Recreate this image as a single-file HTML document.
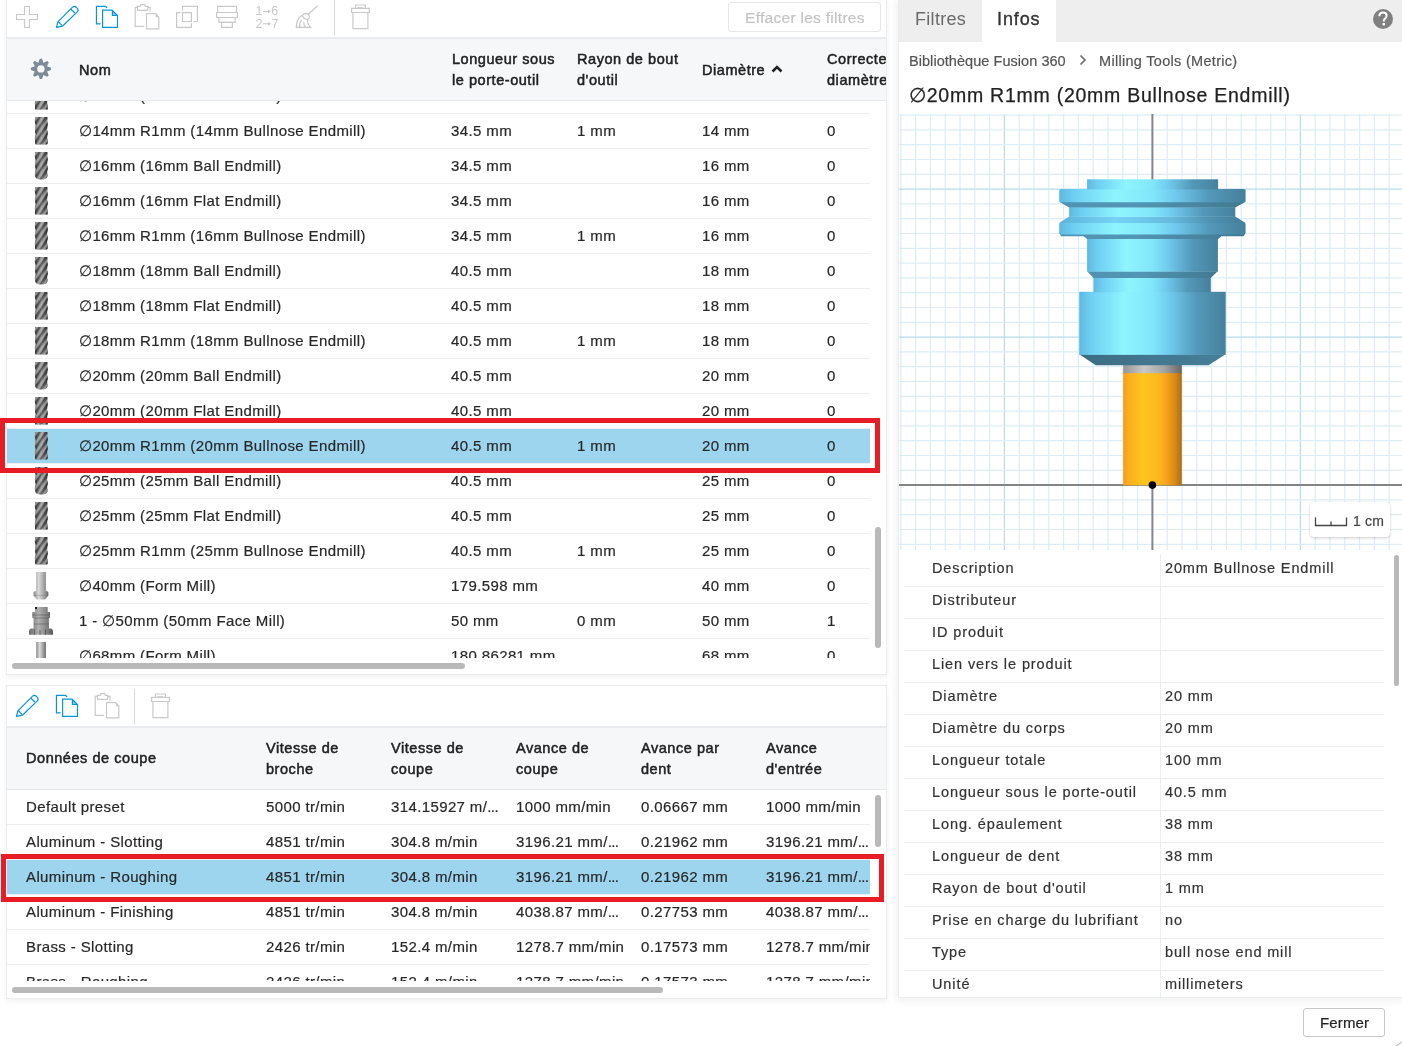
<!DOCTYPE html>
<html><head><meta charset="utf-8">
<style>
*{box-sizing:border-box;margin:0;padding:0}
html,body{width:1402px;height:1046px;overflow:hidden;background:#fff;font-family:"Liberation Sans",sans-serif;color:#282828}
#root{position:absolute;left:0;top:0;width:1402px;height:1046px;will-change:transform}
.a{position:absolute}
.t{position:absolute;font-size:15px;letter-spacing:0.38px;white-space:nowrap;line-height:18px;-webkit-text-stroke:0.2px currentColor}
.h{position:absolute;font-size:14.5px;font-weight:normal;-webkit-text-stroke:0.5px #222;color:#222;white-space:nowrap;line-height:20.6px;letter-spacing:0.55px}
.sep{position:absolute;height:1px;background:#eceef0}
.sb{position:absolute;background:#b9b9b9;border-radius:3px}
.clip{position:absolute;overflow:hidden}
svg{position:absolute;overflow:visible}
</style></head><body><div id="root">

<div class="a" style="left:6px;top:-3px;width:881px;height:678px;border:1px solid #eaedf0;box-shadow:0 3px 6px rgba(0,0,0,0.05);background:#fff"></div>
<div class="a" style="left:6px;top:685px;width:881px;height:314px;border:1px solid #eaedf0;box-shadow:0 3px 6px rgba(0,0,0,0.05);background:#fff"></div>
<div class="a" style="left:898px;top:-3px;width:510px;height:1001px;border:1px solid #eaedf0;box-shadow:-2px 3px 8px rgba(0,0,0,0.06);background:#fff"></div>
<svg style="left:15px;top:5px" width="24" height="24" viewBox="0 0 24 24"><path d="M9.5 1.5h5v8h8v5h-8v8h-5v-8h-8v-5h8z" fill="none" stroke="#c9c9c9" stroke-width="1.15"/></svg>
<svg style="left:50px;top:2px" width="35" height="34" viewBox="0 0 35 34"><g fill="none" stroke="#0696d7" stroke-width="1.2" stroke-linejoin="round"><path d="M6.45 25.4 L7.9 19.8 L22.6 5.1 Q24.4 3.5 26.2 5.2 L27.3 6.3 Q29 8.2 27.3 9.9 L12.4 24.2 Z"/><path d="M8.2 19.5 L12.2 23.6"/><path d="M21 7.2 L24.9 11"/></g></svg>
<svg style="left:90px;top:2px" width="35" height="34" viewBox="0 0 35 34"><g fill="none" stroke="#0696d7" stroke-width="1.2"><path d="M10.6 21.8 H6.45 V4.45 H15.5 L17.2 5.8"/><path d="M12.6 8.2 H22.1 L27.5 13.5 V25.4 H12.6 Z"/><path d="M22.4 8.6 V13.5 H27.3"/><path d="M22.4 8.6 L27.3 13.5 H22.4 Z" fill="#0696d7" opacity="0.5" stroke="none"/></g></svg>
<svg style="left:130px;top:2px" width="35" height="34" viewBox="0 0 35 34"><g fill="none" stroke="#c9c9c9" stroke-width="1.2"><path d="M7.3 5.45 H5.2 V24.4 H14"/><path d="M17.8 5.45 H20.1 V9.5"/><path d="M7.6 8.3 L7.3 4.3 H10.2 L10.9 2.7 H14.6 L15.3 4.3 H17.9 L17.5 8.3 Z"/><path d="M16.5 11.6 H25.8 L28.8 15.2 V26.8 H16.5 Z"/><path d="M25.8 11.6 L28.8 15.2 H25.8 Z" fill="#c9c9c9" stroke="none"/></g></svg>
<svg style="left:170px;top:2px" width="35" height="34" viewBox="0 0 35 34"><g fill="none" stroke="#c9c9c9" stroke-width="1.2"><path d="M10.6 10.6 H6.6 V25.4 H21.4 V21.2"/><path d="M12.5 8.5 V4.45 H27.4 V19.5 H23.2"/><path d="M12.5 10.6 H21.4 V19.5 H12.5 Z"/></g></svg>
<svg style="left:210px;top:2px" width="35" height="34" viewBox="0 0 35 34"><g fill="none" stroke="#c9c9c9" stroke-width="1.2"><path d="M7.6 4.45 H26.4 V10.5 H7.6 Z"/><path d="M6.6 10.5 H27.4 V15.5 H6.6 Z"/><path d="M8.9 15.5 H25.1 V20.4 H8.9 Z"/><path d="M11.6 20.4 H22.4 V25.4 H11.6 Z"/></g></svg>
<svg style="left:250px;top:2px" width="35" height="34" viewBox="0 0 35 34"><g fill="#c9c9c9" font-family="Liberation Sans" font-size="12.5px"><text x="5.6" y="12.6">1</text><text x="21.3" y="13.1">6</text><text x="5.6" y="26">2</text><text x="21.6" y="26">7</text></g><g stroke="#c9c9c9" stroke-width="1.1" fill="#c9c9c9"><path d="M13 9.5 H18.5"/><path d="M18 7.6 L21 9.5 L18 11.4 Z" stroke="none"/><path d="M13 21.8 H18.5"/><path d="M18 19.9 L21 21.8 L18 23.7 Z" stroke="none"/></g></svg>
<svg style="left:290px;top:2px" width="35" height="34" viewBox="0 0 35 34"><g fill="none" stroke="#c9c9c9" stroke-width="1.2" stroke-linecap="round"><path d="M27.1 4.3 L18.4 12.3"/><path d="M12.3 13.4 Q14.2 11.2 17 11.6 Q19.6 12.3 19.5 15 Q19.2 17 17.6 17.4 Q14.2 17.6 12.3 13.4 Z"/><path d="M12.3 13.3 Q6.3 16.5 6.3 25.4 H20.6 Q17 21.5 17.6 17.4"/><path d="M11.5 18.4 Q9.3 20.5 9.5 25.3"/><path d="M13.8 20.1 Q13.6 23.5 15.5 25.3"/></g></svg>
<div class="a" style="left:334px;top:0;width:1px;height:35px;background:#d9d9d9"></div>
<svg style="left:343px;top:0px" width="35" height="34" viewBox="0 0 35 34"><g fill="none" stroke="#c9c9c9" stroke-width="1.2"><path d="M8.6 8.45 H26.3 V12.5 H8.6 Z"/><path d="M12.5 8.45 V5 H22.4 V8.45"/><path d="M14.5 7.7 H20.1" stroke-width="1"/><path d="M9.9 12.5 V28.6 H24.9 V12.5"/></g></svg>
<div class="a" style="left:728px;top:2px;width:153px;height:30px;border:1px solid #e6e6e6;border-radius:3px"></div>
<div class="t" style="left:745px;top:9px;color:#c4c4c4;font-size:15.5px;letter-spacing:0.29px">Effacer les filtres</div>
<div class="a" style="left:7px;top:37px;width:879px;height:2px;background:#e8ecef"></div>
<div class="a" style="left:7px;top:39px;width:879px;height:61px;background:#f5f7f9"></div>
<div class="a" style="left:7px;top:100px;width:879px;height:1px;background:#e6eaed"></div>
<svg style="left:0;top:0" width="1402" height="1046"><path d="M39.79 58.86 L42.01 58.86 L43.43 62.80 L47.21 61.02 L48.78 62.59 L47.00 66.37 L50.94 67.79 L50.94 70.01 L47.00 71.43 L48.78 75.21 L47.21 76.78 L43.43 75.00 L42.01 78.94 L39.79 78.94 L38.37 75.00 L34.59 76.78 L33.02 75.21 L34.80 71.43 L30.86 70.01 L30.86 67.79 L34.80 66.37 L33.02 62.59 L34.59 61.02 L38.37 62.80Z M37.20 68.90 a3.70 3.70 0 1 0 7.40 0 a3.70 3.70 0 1 0 -7.40 0Z" fill="#7c8b97" fill-rule="evenodd"/></svg>
<div class="h" style="left:79px;top:60px">Nom</div>
<div class="h" style="left:452px;top:49px">Longueur sous<br>le porte-outil</div>
<div class="h" style="left:577px;top:49px">Rayon de bout<br>d'outil</div>
<div class="h" style="left:702px;top:60px">Diamètre</div>
<svg style="left:771px;top:65px" width="12" height="8" viewBox="0 0 12 8"><path d="M1.5 6.5 L6 2 L10.5 6.5" fill="none" stroke="#222" stroke-width="2.6"/></svg>
<div class="clip" style="left:820px;top:40px;width:66px;height:55px"><div class="h" style="left:7px;top:9px">Correcteur de<br>diamètre</div></div>
<div class="clip" style="left:7px;top:101px;width:879px;height:557px">
<div class="t" style="left:72px;top:-14.5px">∅14mm (14mm Flat Endmill)</div>
<div class="t" style="left:444px;top:-14.5px">34.5 mm</div>
<div class="t" style="left:695px;top:-14.5px">14 mm</div>
<div class="t" style="left:820px;top:-14.5px">0</div>
<div class="sep" style="left:0;top:12px;width:863px"></div>
<div class="t" style="left:72px;top:20.5px">∅14mm R1mm (14mm Bullnose Endmill)</div>
<div class="t" style="left:444px;top:20.5px">34.5 mm</div>
<div class="t" style="left:570px;top:20.5px">1 mm</div>
<div class="t" style="left:695px;top:20.5px">14 mm</div>
<div class="t" style="left:820px;top:20.5px">0</div>
<div class="sep" style="left:0;top:47px;width:863px"></div>
<div class="t" style="left:72px;top:55.5px">∅16mm (16mm Ball Endmill)</div>
<div class="t" style="left:444px;top:55.5px">34.5 mm</div>
<div class="t" style="left:695px;top:55.5px">16 mm</div>
<div class="t" style="left:820px;top:55.5px">0</div>
<div class="sep" style="left:0;top:82px;width:863px"></div>
<div class="t" style="left:72px;top:90.5px">∅16mm (16mm Flat Endmill)</div>
<div class="t" style="left:444px;top:90.5px">34.5 mm</div>
<div class="t" style="left:695px;top:90.5px">16 mm</div>
<div class="t" style="left:820px;top:90.5px">0</div>
<div class="sep" style="left:0;top:117px;width:863px"></div>
<div class="t" style="left:72px;top:125.5px">∅16mm R1mm (16mm Bullnose Endmill)</div>
<div class="t" style="left:444px;top:125.5px">34.5 mm</div>
<div class="t" style="left:570px;top:125.5px">1 mm</div>
<div class="t" style="left:695px;top:125.5px">16 mm</div>
<div class="t" style="left:820px;top:125.5px">0</div>
<div class="sep" style="left:0;top:152px;width:863px"></div>
<div class="t" style="left:72px;top:160.5px">∅18mm (18mm Ball Endmill)</div>
<div class="t" style="left:444px;top:160.5px">40.5 mm</div>
<div class="t" style="left:695px;top:160.5px">18 mm</div>
<div class="t" style="left:820px;top:160.5px">0</div>
<div class="sep" style="left:0;top:187px;width:863px"></div>
<div class="t" style="left:72px;top:195.5px">∅18mm (18mm Flat Endmill)</div>
<div class="t" style="left:444px;top:195.5px">40.5 mm</div>
<div class="t" style="left:695px;top:195.5px">18 mm</div>
<div class="t" style="left:820px;top:195.5px">0</div>
<div class="sep" style="left:0;top:222px;width:863px"></div>
<div class="t" style="left:72px;top:230.5px">∅18mm R1mm (18mm Bullnose Endmill)</div>
<div class="t" style="left:444px;top:230.5px">40.5 mm</div>
<div class="t" style="left:570px;top:230.5px">1 mm</div>
<div class="t" style="left:695px;top:230.5px">18 mm</div>
<div class="t" style="left:820px;top:230.5px">0</div>
<div class="sep" style="left:0;top:257px;width:863px"></div>
<div class="t" style="left:72px;top:265.5px">∅20mm (20mm Ball Endmill)</div>
<div class="t" style="left:444px;top:265.5px">40.5 mm</div>
<div class="t" style="left:695px;top:265.5px">20 mm</div>
<div class="t" style="left:820px;top:265.5px">0</div>
<div class="sep" style="left:0;top:292px;width:863px"></div>
<div class="t" style="left:72px;top:300.5px">∅20mm (20mm Flat Endmill)</div>
<div class="t" style="left:444px;top:300.5px">40.5 mm</div>
<div class="t" style="left:695px;top:300.5px">20 mm</div>
<div class="t" style="left:820px;top:300.5px">0</div>
<div class="a" style="left:0;top:328px;width:863px;height:34px;background:#9dd5ef"></div>
<div class="sep" style="left:0;top:327px;width:863px"></div>
<div class="t" style="left:72px;top:335.5px">∅20mm R1mm (20mm Bullnose Endmill)</div>
<div class="t" style="left:444px;top:335.5px">40.5 mm</div>
<div class="t" style="left:570px;top:335.5px">1 mm</div>
<div class="t" style="left:695px;top:335.5px">20 mm</div>
<div class="t" style="left:820px;top:335.5px">0</div>
<div class="sep" style="left:0;top:362px;width:863px"></div>
<div class="t" style="left:72px;top:370.5px">∅25mm (25mm Ball Endmill)</div>
<div class="t" style="left:444px;top:370.5px">40.5 mm</div>
<div class="t" style="left:695px;top:370.5px">25 mm</div>
<div class="t" style="left:820px;top:370.5px">0</div>
<div class="sep" style="left:0;top:397px;width:863px"></div>
<div class="t" style="left:72px;top:405.5px">∅25mm (25mm Flat Endmill)</div>
<div class="t" style="left:444px;top:405.5px">40.5 mm</div>
<div class="t" style="left:695px;top:405.5px">25 mm</div>
<div class="t" style="left:820px;top:405.5px">0</div>
<div class="sep" style="left:0;top:432px;width:863px"></div>
<div class="t" style="left:72px;top:440.5px">∅25mm R1mm (25mm Bullnose Endmill)</div>
<div class="t" style="left:444px;top:440.5px">40.5 mm</div>
<div class="t" style="left:570px;top:440.5px">1 mm</div>
<div class="t" style="left:695px;top:440.5px">25 mm</div>
<div class="t" style="left:820px;top:440.5px">0</div>
<div class="sep" style="left:0;top:467px;width:863px"></div>
<div class="t" style="left:72px;top:475.5px">∅40mm (Form Mill)</div>
<div class="t" style="left:444px;top:475.5px">179.598 mm</div>
<div class="t" style="left:695px;top:475.5px">40 mm</div>
<div class="t" style="left:820px;top:475.5px">0</div>
<div class="sep" style="left:0;top:502px;width:863px"></div>
<div class="t" style="left:72px;top:510.5px">1 - ∅50mm (50mm Face Mill)</div>
<div class="t" style="left:444px;top:510.5px">50 mm</div>
<div class="t" style="left:570px;top:510.5px">0 mm</div>
<div class="t" style="left:695px;top:510.5px">50 mm</div>
<div class="t" style="left:820px;top:510.5px">1</div>
<div class="sep" style="left:0;top:537px;width:863px"></div>
<div class="t" style="left:72px;top:545.5px">∅68mm (Form Mill)</div>
<div class="t" style="left:444px;top:545.5px">180.86281 mm</div>
<div class="t" style="left:695px;top:545.5px">68 mm</div>
<div class="t" style="left:820px;top:545.5px">0</div>
<svg style="left:0;top:0" width="879" height="557"><defs><linearGradient id="em" x1="0" x2="1"><stop offset="0" stop-color="#3a3a3a"/><stop offset="0.2" stop-color="#666"/><stop offset="0.5" stop-color="#8a8a8a"/><stop offset="0.8" stop-color="#555"/><stop offset="1" stop-color="#2e2e2e"/></linearGradient><linearGradient id="fm" x1="0" x2="1"><stop offset="0" stop-color="#8a8a8a"/><stop offset="0.35" stop-color="#dadada"/><stop offset="0.75" stop-color="#9a9a9a"/><stop offset="1" stop-color="#666"/></linearGradient><linearGradient id="fc" x1="0" x2="1"><stop offset="0" stop-color="#6a6a6a"/><stop offset="0.4" stop-color="#b0b0b0"/><stop offset="0.8" stop-color="#7a7a7a"/><stop offset="1" stop-color="#555"/></linearGradient></defs><g transform="translate(27.799999999999997,-19)"><clipPath id="ec1"><path d="M0.4 0 H12.6 L12.8 1.5 Q12 3.8 12.9 6 Q13.3 8.3 12.5 10.4 Q11.9 12.5 12.9 14.6 Q13.3 16.9 12.5 19 Q11.9 21 12.9 23 L12.9 27.5 H0.2 L0.2 23 Q-0.2 20.8 0.6 18.6 Q1.1 16.5 0.2 14.4 Q-0.2 12.2 0.6 10 Q1.1 7.9 0.2 5.8 Q-0.2 3.6 0.5 1.5 Z"/></clipPath><path d="M0.4 0 H12.6 L12.8 1.5 Q12 3.8 12.9 6 Q13.3 8.3 12.5 10.4 Q11.9 12.5 12.9 14.6 Q13.3 16.9 12.5 19 Q11.9 21 12.9 23 L12.9 27.5 H0.2 L0.2 23 Q-0.2 20.8 0.6 18.6 Q1.1 16.5 0.2 14.4 Q-0.2 12.2 0.6 10 Q1.1 7.9 0.2 5.8 Q-0.2 3.6 0.5 1.5 Z" fill="url(#em)"/><g clip-path="url(#ec1)"><path d="M-1 4.5 L14 -18.0" stroke="#c8c8c8" stroke-width="2.2" opacity="0.55"/><path d="M-1 9.0 L14 -13.5" stroke="#262626" stroke-width="1.2" opacity="0.45"/><path d="M-1 14.0 L14 -8.5" stroke="#c8c8c8" stroke-width="2.2" opacity="0.55"/><path d="M-1 18.5 L14 -4.0" stroke="#262626" stroke-width="1.2" opacity="0.45"/><path d="M-1 23.5 L14 1.0" stroke="#c8c8c8" stroke-width="2.2" opacity="0.55"/><path d="M-1 28.0 L14 5.5" stroke="#262626" stroke-width="1.2" opacity="0.45"/><path d="M-1 33.0 L14 10.5" stroke="#c8c8c8" stroke-width="2.2" opacity="0.55"/><path d="M-1 37.5 L14 15.0" stroke="#262626" stroke-width="1.2" opacity="0.45"/><path d="M-1 42.5 L14 20.0" stroke="#c8c8c8" stroke-width="2.2" opacity="0.55"/><path d="M-1 47.0 L14 24.5" stroke="#262626" stroke-width="1.2" opacity="0.45"/><path d="M-1 52.0 L14 29.5" stroke="#c8c8c8" stroke-width="2.2" opacity="0.55"/><path d="M-1 56.5 L14 34.0" stroke="#262626" stroke-width="1.2" opacity="0.45"/></g></g><g transform="translate(27.799999999999997,16)"><clipPath id="ec2"><path d="M0.4 0 H12.6 L12.8 1.5 Q12 3.8 12.9 6 Q13.3 8.3 12.5 10.4 Q11.9 12.5 12.9 14.6 Q13.3 16.9 12.5 19 Q11.9 21 12.9 23 L12.9 26 Q12.9 27.5 11.4 27.5 H1.6 Q0.2 27.5 0.2 26 L0.2 23 Q-0.2 20.8 0.6 18.6 Q1.1 16.5 0.2 14.4 Q-0.2 12.2 0.6 10 Q1.1 7.9 0.2 5.8 Q-0.2 3.6 0.5 1.5 Z"/></clipPath><path d="M0.4 0 H12.6 L12.8 1.5 Q12 3.8 12.9 6 Q13.3 8.3 12.5 10.4 Q11.9 12.5 12.9 14.6 Q13.3 16.9 12.5 19 Q11.9 21 12.9 23 L12.9 26 Q12.9 27.5 11.4 27.5 H1.6 Q0.2 27.5 0.2 26 L0.2 23 Q-0.2 20.8 0.6 18.6 Q1.1 16.5 0.2 14.4 Q-0.2 12.2 0.6 10 Q1.1 7.9 0.2 5.8 Q-0.2 3.6 0.5 1.5 Z" fill="url(#em)"/><g clip-path="url(#ec2)"><path d="M-1 4.5 L14 -18.0" stroke="#c8c8c8" stroke-width="2.2" opacity="0.55"/><path d="M-1 9.0 L14 -13.5" stroke="#262626" stroke-width="1.2" opacity="0.45"/><path d="M-1 14.0 L14 -8.5" stroke="#c8c8c8" stroke-width="2.2" opacity="0.55"/><path d="M-1 18.5 L14 -4.0" stroke="#262626" stroke-width="1.2" opacity="0.45"/><path d="M-1 23.5 L14 1.0" stroke="#c8c8c8" stroke-width="2.2" opacity="0.55"/><path d="M-1 28.0 L14 5.5" stroke="#262626" stroke-width="1.2" opacity="0.45"/><path d="M-1 33.0 L14 10.5" stroke="#c8c8c8" stroke-width="2.2" opacity="0.55"/><path d="M-1 37.5 L14 15.0" stroke="#262626" stroke-width="1.2" opacity="0.45"/><path d="M-1 42.5 L14 20.0" stroke="#c8c8c8" stroke-width="2.2" opacity="0.55"/><path d="M-1 47.0 L14 24.5" stroke="#262626" stroke-width="1.2" opacity="0.45"/><path d="M-1 52.0 L14 29.5" stroke="#c8c8c8" stroke-width="2.2" opacity="0.55"/><path d="M-1 56.5 L14 34.0" stroke="#262626" stroke-width="1.2" opacity="0.45"/></g></g><g transform="translate(27.799999999999997,51)"><clipPath id="ec3"><path d="M0.4 0 H12.6 L12.8 1.5 Q12 3.8 12.9 6 Q13.3 8.3 12.5 10.4 Q11.9 12.5 12.9 14.6 Q13.3 16.9 12.5 19 Q11.9 21 12.9 23 Q12.9 27.5 6.5 27.5 Q0.2 27.5 0.2 23 Q-0.2 20.8 0.6 18.6 Q1.1 16.5 0.2 14.4 Q-0.2 12.2 0.6 10 Q1.1 7.9 0.2 5.8 Q-0.2 3.6 0.5 1.5 Z"/></clipPath><path d="M0.4 0 H12.6 L12.8 1.5 Q12 3.8 12.9 6 Q13.3 8.3 12.5 10.4 Q11.9 12.5 12.9 14.6 Q13.3 16.9 12.5 19 Q11.9 21 12.9 23 Q12.9 27.5 6.5 27.5 Q0.2 27.5 0.2 23 Q-0.2 20.8 0.6 18.6 Q1.1 16.5 0.2 14.4 Q-0.2 12.2 0.6 10 Q1.1 7.9 0.2 5.8 Q-0.2 3.6 0.5 1.5 Z" fill="url(#em)"/><g clip-path="url(#ec3)"><path d="M-1 4.5 L14 -18.0" stroke="#c8c8c8" stroke-width="2.2" opacity="0.55"/><path d="M-1 9.0 L14 -13.5" stroke="#262626" stroke-width="1.2" opacity="0.45"/><path d="M-1 14.0 L14 -8.5" stroke="#c8c8c8" stroke-width="2.2" opacity="0.55"/><path d="M-1 18.5 L14 -4.0" stroke="#262626" stroke-width="1.2" opacity="0.45"/><path d="M-1 23.5 L14 1.0" stroke="#c8c8c8" stroke-width="2.2" opacity="0.55"/><path d="M-1 28.0 L14 5.5" stroke="#262626" stroke-width="1.2" opacity="0.45"/><path d="M-1 33.0 L14 10.5" stroke="#c8c8c8" stroke-width="2.2" opacity="0.55"/><path d="M-1 37.5 L14 15.0" stroke="#262626" stroke-width="1.2" opacity="0.45"/><path d="M-1 42.5 L14 20.0" stroke="#c8c8c8" stroke-width="2.2" opacity="0.55"/><path d="M-1 47.0 L14 24.5" stroke="#262626" stroke-width="1.2" opacity="0.45"/><path d="M-1 52.0 L14 29.5" stroke="#c8c8c8" stroke-width="2.2" opacity="0.55"/><path d="M-1 56.5 L14 34.0" stroke="#262626" stroke-width="1.2" opacity="0.45"/></g></g><g transform="translate(27.799999999999997,86)"><clipPath id="ec4"><path d="M0.4 0 H12.6 L12.8 1.5 Q12 3.8 12.9 6 Q13.3 8.3 12.5 10.4 Q11.9 12.5 12.9 14.6 Q13.3 16.9 12.5 19 Q11.9 21 12.9 23 L12.9 27.5 H0.2 L0.2 23 Q-0.2 20.8 0.6 18.6 Q1.1 16.5 0.2 14.4 Q-0.2 12.2 0.6 10 Q1.1 7.9 0.2 5.8 Q-0.2 3.6 0.5 1.5 Z"/></clipPath><path d="M0.4 0 H12.6 L12.8 1.5 Q12 3.8 12.9 6 Q13.3 8.3 12.5 10.4 Q11.9 12.5 12.9 14.6 Q13.3 16.9 12.5 19 Q11.9 21 12.9 23 L12.9 27.5 H0.2 L0.2 23 Q-0.2 20.8 0.6 18.6 Q1.1 16.5 0.2 14.4 Q-0.2 12.2 0.6 10 Q1.1 7.9 0.2 5.8 Q-0.2 3.6 0.5 1.5 Z" fill="url(#em)"/><g clip-path="url(#ec4)"><path d="M-1 4.5 L14 -18.0" stroke="#c8c8c8" stroke-width="2.2" opacity="0.55"/><path d="M-1 9.0 L14 -13.5" stroke="#262626" stroke-width="1.2" opacity="0.45"/><path d="M-1 14.0 L14 -8.5" stroke="#c8c8c8" stroke-width="2.2" opacity="0.55"/><path d="M-1 18.5 L14 -4.0" stroke="#262626" stroke-width="1.2" opacity="0.45"/><path d="M-1 23.5 L14 1.0" stroke="#c8c8c8" stroke-width="2.2" opacity="0.55"/><path d="M-1 28.0 L14 5.5" stroke="#262626" stroke-width="1.2" opacity="0.45"/><path d="M-1 33.0 L14 10.5" stroke="#c8c8c8" stroke-width="2.2" opacity="0.55"/><path d="M-1 37.5 L14 15.0" stroke="#262626" stroke-width="1.2" opacity="0.45"/><path d="M-1 42.5 L14 20.0" stroke="#c8c8c8" stroke-width="2.2" opacity="0.55"/><path d="M-1 47.0 L14 24.5" stroke="#262626" stroke-width="1.2" opacity="0.45"/><path d="M-1 52.0 L14 29.5" stroke="#c8c8c8" stroke-width="2.2" opacity="0.55"/><path d="M-1 56.5 L14 34.0" stroke="#262626" stroke-width="1.2" opacity="0.45"/></g></g><g transform="translate(27.799999999999997,121)"><clipPath id="ec5"><path d="M0.4 0 H12.6 L12.8 1.5 Q12 3.8 12.9 6 Q13.3 8.3 12.5 10.4 Q11.9 12.5 12.9 14.6 Q13.3 16.9 12.5 19 Q11.9 21 12.9 23 L12.9 26 Q12.9 27.5 11.4 27.5 H1.6 Q0.2 27.5 0.2 26 L0.2 23 Q-0.2 20.8 0.6 18.6 Q1.1 16.5 0.2 14.4 Q-0.2 12.2 0.6 10 Q1.1 7.9 0.2 5.8 Q-0.2 3.6 0.5 1.5 Z"/></clipPath><path d="M0.4 0 H12.6 L12.8 1.5 Q12 3.8 12.9 6 Q13.3 8.3 12.5 10.4 Q11.9 12.5 12.9 14.6 Q13.3 16.9 12.5 19 Q11.9 21 12.9 23 L12.9 26 Q12.9 27.5 11.4 27.5 H1.6 Q0.2 27.5 0.2 26 L0.2 23 Q-0.2 20.8 0.6 18.6 Q1.1 16.5 0.2 14.4 Q-0.2 12.2 0.6 10 Q1.1 7.9 0.2 5.8 Q-0.2 3.6 0.5 1.5 Z" fill="url(#em)"/><g clip-path="url(#ec5)"><path d="M-1 4.5 L14 -18.0" stroke="#c8c8c8" stroke-width="2.2" opacity="0.55"/><path d="M-1 9.0 L14 -13.5" stroke="#262626" stroke-width="1.2" opacity="0.45"/><path d="M-1 14.0 L14 -8.5" stroke="#c8c8c8" stroke-width="2.2" opacity="0.55"/><path d="M-1 18.5 L14 -4.0" stroke="#262626" stroke-width="1.2" opacity="0.45"/><path d="M-1 23.5 L14 1.0" stroke="#c8c8c8" stroke-width="2.2" opacity="0.55"/><path d="M-1 28.0 L14 5.5" stroke="#262626" stroke-width="1.2" opacity="0.45"/><path d="M-1 33.0 L14 10.5" stroke="#c8c8c8" stroke-width="2.2" opacity="0.55"/><path d="M-1 37.5 L14 15.0" stroke="#262626" stroke-width="1.2" opacity="0.45"/><path d="M-1 42.5 L14 20.0" stroke="#c8c8c8" stroke-width="2.2" opacity="0.55"/><path d="M-1 47.0 L14 24.5" stroke="#262626" stroke-width="1.2" opacity="0.45"/><path d="M-1 52.0 L14 29.5" stroke="#c8c8c8" stroke-width="2.2" opacity="0.55"/><path d="M-1 56.5 L14 34.0" stroke="#262626" stroke-width="1.2" opacity="0.45"/></g></g><g transform="translate(27.799999999999997,156)"><clipPath id="ec6"><path d="M0.4 0 H12.6 L12.8 1.5 Q12 3.8 12.9 6 Q13.3 8.3 12.5 10.4 Q11.9 12.5 12.9 14.6 Q13.3 16.9 12.5 19 Q11.9 21 12.9 23 Q12.9 27.5 6.5 27.5 Q0.2 27.5 0.2 23 Q-0.2 20.8 0.6 18.6 Q1.1 16.5 0.2 14.4 Q-0.2 12.2 0.6 10 Q1.1 7.9 0.2 5.8 Q-0.2 3.6 0.5 1.5 Z"/></clipPath><path d="M0.4 0 H12.6 L12.8 1.5 Q12 3.8 12.9 6 Q13.3 8.3 12.5 10.4 Q11.9 12.5 12.9 14.6 Q13.3 16.9 12.5 19 Q11.9 21 12.9 23 Q12.9 27.5 6.5 27.5 Q0.2 27.5 0.2 23 Q-0.2 20.8 0.6 18.6 Q1.1 16.5 0.2 14.4 Q-0.2 12.2 0.6 10 Q1.1 7.9 0.2 5.8 Q-0.2 3.6 0.5 1.5 Z" fill="url(#em)"/><g clip-path="url(#ec6)"><path d="M-1 4.5 L14 -18.0" stroke="#c8c8c8" stroke-width="2.2" opacity="0.55"/><path d="M-1 9.0 L14 -13.5" stroke="#262626" stroke-width="1.2" opacity="0.45"/><path d="M-1 14.0 L14 -8.5" stroke="#c8c8c8" stroke-width="2.2" opacity="0.55"/><path d="M-1 18.5 L14 -4.0" stroke="#262626" stroke-width="1.2" opacity="0.45"/><path d="M-1 23.5 L14 1.0" stroke="#c8c8c8" stroke-width="2.2" opacity="0.55"/><path d="M-1 28.0 L14 5.5" stroke="#262626" stroke-width="1.2" opacity="0.45"/><path d="M-1 33.0 L14 10.5" stroke="#c8c8c8" stroke-width="2.2" opacity="0.55"/><path d="M-1 37.5 L14 15.0" stroke="#262626" stroke-width="1.2" opacity="0.45"/><path d="M-1 42.5 L14 20.0" stroke="#c8c8c8" stroke-width="2.2" opacity="0.55"/><path d="M-1 47.0 L14 24.5" stroke="#262626" stroke-width="1.2" opacity="0.45"/><path d="M-1 52.0 L14 29.5" stroke="#c8c8c8" stroke-width="2.2" opacity="0.55"/><path d="M-1 56.5 L14 34.0" stroke="#262626" stroke-width="1.2" opacity="0.45"/></g></g><g transform="translate(27.799999999999997,191)"><clipPath id="ec7"><path d="M0.4 0 H12.6 L12.8 1.5 Q12 3.8 12.9 6 Q13.3 8.3 12.5 10.4 Q11.9 12.5 12.9 14.6 Q13.3 16.9 12.5 19 Q11.9 21 12.9 23 L12.9 27.5 H0.2 L0.2 23 Q-0.2 20.8 0.6 18.6 Q1.1 16.5 0.2 14.4 Q-0.2 12.2 0.6 10 Q1.1 7.9 0.2 5.8 Q-0.2 3.6 0.5 1.5 Z"/></clipPath><path d="M0.4 0 H12.6 L12.8 1.5 Q12 3.8 12.9 6 Q13.3 8.3 12.5 10.4 Q11.9 12.5 12.9 14.6 Q13.3 16.9 12.5 19 Q11.9 21 12.9 23 L12.9 27.5 H0.2 L0.2 23 Q-0.2 20.8 0.6 18.6 Q1.1 16.5 0.2 14.4 Q-0.2 12.2 0.6 10 Q1.1 7.9 0.2 5.8 Q-0.2 3.6 0.5 1.5 Z" fill="url(#em)"/><g clip-path="url(#ec7)"><path d="M-1 4.5 L14 -18.0" stroke="#c8c8c8" stroke-width="2.2" opacity="0.55"/><path d="M-1 9.0 L14 -13.5" stroke="#262626" stroke-width="1.2" opacity="0.45"/><path d="M-1 14.0 L14 -8.5" stroke="#c8c8c8" stroke-width="2.2" opacity="0.55"/><path d="M-1 18.5 L14 -4.0" stroke="#262626" stroke-width="1.2" opacity="0.45"/><path d="M-1 23.5 L14 1.0" stroke="#c8c8c8" stroke-width="2.2" opacity="0.55"/><path d="M-1 28.0 L14 5.5" stroke="#262626" stroke-width="1.2" opacity="0.45"/><path d="M-1 33.0 L14 10.5" stroke="#c8c8c8" stroke-width="2.2" opacity="0.55"/><path d="M-1 37.5 L14 15.0" stroke="#262626" stroke-width="1.2" opacity="0.45"/><path d="M-1 42.5 L14 20.0" stroke="#c8c8c8" stroke-width="2.2" opacity="0.55"/><path d="M-1 47.0 L14 24.5" stroke="#262626" stroke-width="1.2" opacity="0.45"/><path d="M-1 52.0 L14 29.5" stroke="#c8c8c8" stroke-width="2.2" opacity="0.55"/><path d="M-1 56.5 L14 34.0" stroke="#262626" stroke-width="1.2" opacity="0.45"/></g></g><g transform="translate(27.799999999999997,226)"><clipPath id="ec8"><path d="M0.4 0 H12.6 L12.8 1.5 Q12 3.8 12.9 6 Q13.3 8.3 12.5 10.4 Q11.9 12.5 12.9 14.6 Q13.3 16.9 12.5 19 Q11.9 21 12.9 23 L12.9 26 Q12.9 27.5 11.4 27.5 H1.6 Q0.2 27.5 0.2 26 L0.2 23 Q-0.2 20.8 0.6 18.6 Q1.1 16.5 0.2 14.4 Q-0.2 12.2 0.6 10 Q1.1 7.9 0.2 5.8 Q-0.2 3.6 0.5 1.5 Z"/></clipPath><path d="M0.4 0 H12.6 L12.8 1.5 Q12 3.8 12.9 6 Q13.3 8.3 12.5 10.4 Q11.9 12.5 12.9 14.6 Q13.3 16.9 12.5 19 Q11.9 21 12.9 23 L12.9 26 Q12.9 27.5 11.4 27.5 H1.6 Q0.2 27.5 0.2 26 L0.2 23 Q-0.2 20.8 0.6 18.6 Q1.1 16.5 0.2 14.4 Q-0.2 12.2 0.6 10 Q1.1 7.9 0.2 5.8 Q-0.2 3.6 0.5 1.5 Z" fill="url(#em)"/><g clip-path="url(#ec8)"><path d="M-1 4.5 L14 -18.0" stroke="#c8c8c8" stroke-width="2.2" opacity="0.55"/><path d="M-1 9.0 L14 -13.5" stroke="#262626" stroke-width="1.2" opacity="0.45"/><path d="M-1 14.0 L14 -8.5" stroke="#c8c8c8" stroke-width="2.2" opacity="0.55"/><path d="M-1 18.5 L14 -4.0" stroke="#262626" stroke-width="1.2" opacity="0.45"/><path d="M-1 23.5 L14 1.0" stroke="#c8c8c8" stroke-width="2.2" opacity="0.55"/><path d="M-1 28.0 L14 5.5" stroke="#262626" stroke-width="1.2" opacity="0.45"/><path d="M-1 33.0 L14 10.5" stroke="#c8c8c8" stroke-width="2.2" opacity="0.55"/><path d="M-1 37.5 L14 15.0" stroke="#262626" stroke-width="1.2" opacity="0.45"/><path d="M-1 42.5 L14 20.0" stroke="#c8c8c8" stroke-width="2.2" opacity="0.55"/><path d="M-1 47.0 L14 24.5" stroke="#262626" stroke-width="1.2" opacity="0.45"/><path d="M-1 52.0 L14 29.5" stroke="#c8c8c8" stroke-width="2.2" opacity="0.55"/><path d="M-1 56.5 L14 34.0" stroke="#262626" stroke-width="1.2" opacity="0.45"/></g></g><g transform="translate(27.799999999999997,261)"><clipPath id="ec9"><path d="M0.4 0 H12.6 L12.8 1.5 Q12 3.8 12.9 6 Q13.3 8.3 12.5 10.4 Q11.9 12.5 12.9 14.6 Q13.3 16.9 12.5 19 Q11.9 21 12.9 23 Q12.9 27.5 6.5 27.5 Q0.2 27.5 0.2 23 Q-0.2 20.8 0.6 18.6 Q1.1 16.5 0.2 14.4 Q-0.2 12.2 0.6 10 Q1.1 7.9 0.2 5.8 Q-0.2 3.6 0.5 1.5 Z"/></clipPath><path d="M0.4 0 H12.6 L12.8 1.5 Q12 3.8 12.9 6 Q13.3 8.3 12.5 10.4 Q11.9 12.5 12.9 14.6 Q13.3 16.9 12.5 19 Q11.9 21 12.9 23 Q12.9 27.5 6.5 27.5 Q0.2 27.5 0.2 23 Q-0.2 20.8 0.6 18.6 Q1.1 16.5 0.2 14.4 Q-0.2 12.2 0.6 10 Q1.1 7.9 0.2 5.8 Q-0.2 3.6 0.5 1.5 Z" fill="url(#em)"/><g clip-path="url(#ec9)"><path d="M-1 4.5 L14 -18.0" stroke="#c8c8c8" stroke-width="2.2" opacity="0.55"/><path d="M-1 9.0 L14 -13.5" stroke="#262626" stroke-width="1.2" opacity="0.45"/><path d="M-1 14.0 L14 -8.5" stroke="#c8c8c8" stroke-width="2.2" opacity="0.55"/><path d="M-1 18.5 L14 -4.0" stroke="#262626" stroke-width="1.2" opacity="0.45"/><path d="M-1 23.5 L14 1.0" stroke="#c8c8c8" stroke-width="2.2" opacity="0.55"/><path d="M-1 28.0 L14 5.5" stroke="#262626" stroke-width="1.2" opacity="0.45"/><path d="M-1 33.0 L14 10.5" stroke="#c8c8c8" stroke-width="2.2" opacity="0.55"/><path d="M-1 37.5 L14 15.0" stroke="#262626" stroke-width="1.2" opacity="0.45"/><path d="M-1 42.5 L14 20.0" stroke="#c8c8c8" stroke-width="2.2" opacity="0.55"/><path d="M-1 47.0 L14 24.5" stroke="#262626" stroke-width="1.2" opacity="0.45"/><path d="M-1 52.0 L14 29.5" stroke="#c8c8c8" stroke-width="2.2" opacity="0.55"/><path d="M-1 56.5 L14 34.0" stroke="#262626" stroke-width="1.2" opacity="0.45"/></g></g><g transform="translate(27.799999999999997,296)"><clipPath id="ec10"><path d="M0.4 0 H12.6 L12.8 1.5 Q12 3.8 12.9 6 Q13.3 8.3 12.5 10.4 Q11.9 12.5 12.9 14.6 Q13.3 16.9 12.5 19 Q11.9 21 12.9 23 L12.9 27.5 H0.2 L0.2 23 Q-0.2 20.8 0.6 18.6 Q1.1 16.5 0.2 14.4 Q-0.2 12.2 0.6 10 Q1.1 7.9 0.2 5.8 Q-0.2 3.6 0.5 1.5 Z"/></clipPath><path d="M0.4 0 H12.6 L12.8 1.5 Q12 3.8 12.9 6 Q13.3 8.3 12.5 10.4 Q11.9 12.5 12.9 14.6 Q13.3 16.9 12.5 19 Q11.9 21 12.9 23 L12.9 27.5 H0.2 L0.2 23 Q-0.2 20.8 0.6 18.6 Q1.1 16.5 0.2 14.4 Q-0.2 12.2 0.6 10 Q1.1 7.9 0.2 5.8 Q-0.2 3.6 0.5 1.5 Z" fill="url(#em)"/><g clip-path="url(#ec10)"><path d="M-1 4.5 L14 -18.0" stroke="#c8c8c8" stroke-width="2.2" opacity="0.55"/><path d="M-1 9.0 L14 -13.5" stroke="#262626" stroke-width="1.2" opacity="0.45"/><path d="M-1 14.0 L14 -8.5" stroke="#c8c8c8" stroke-width="2.2" opacity="0.55"/><path d="M-1 18.5 L14 -4.0" stroke="#262626" stroke-width="1.2" opacity="0.45"/><path d="M-1 23.5 L14 1.0" stroke="#c8c8c8" stroke-width="2.2" opacity="0.55"/><path d="M-1 28.0 L14 5.5" stroke="#262626" stroke-width="1.2" opacity="0.45"/><path d="M-1 33.0 L14 10.5" stroke="#c8c8c8" stroke-width="2.2" opacity="0.55"/><path d="M-1 37.5 L14 15.0" stroke="#262626" stroke-width="1.2" opacity="0.45"/><path d="M-1 42.5 L14 20.0" stroke="#c8c8c8" stroke-width="2.2" opacity="0.55"/><path d="M-1 47.0 L14 24.5" stroke="#262626" stroke-width="1.2" opacity="0.45"/><path d="M-1 52.0 L14 29.5" stroke="#c8c8c8" stroke-width="2.2" opacity="0.55"/><path d="M-1 56.5 L14 34.0" stroke="#262626" stroke-width="1.2" opacity="0.45"/></g></g><g transform="translate(27.799999999999997,331)"><clipPath id="ec11"><path d="M0.4 0 H12.6 L12.8 1.5 Q12 3.8 12.9 6 Q13.3 8.3 12.5 10.4 Q11.9 12.5 12.9 14.6 Q13.3 16.9 12.5 19 Q11.9 21 12.9 23 L12.9 26 Q12.9 27.5 11.4 27.5 H1.6 Q0.2 27.5 0.2 26 L0.2 23 Q-0.2 20.8 0.6 18.6 Q1.1 16.5 0.2 14.4 Q-0.2 12.2 0.6 10 Q1.1 7.9 0.2 5.8 Q-0.2 3.6 0.5 1.5 Z"/></clipPath><path d="M0.4 0 H12.6 L12.8 1.5 Q12 3.8 12.9 6 Q13.3 8.3 12.5 10.4 Q11.9 12.5 12.9 14.6 Q13.3 16.9 12.5 19 Q11.9 21 12.9 23 L12.9 26 Q12.9 27.5 11.4 27.5 H1.6 Q0.2 27.5 0.2 26 L0.2 23 Q-0.2 20.8 0.6 18.6 Q1.1 16.5 0.2 14.4 Q-0.2 12.2 0.6 10 Q1.1 7.9 0.2 5.8 Q-0.2 3.6 0.5 1.5 Z" fill="url(#em)"/><g clip-path="url(#ec11)"><path d="M-1 4.5 L14 -18.0" stroke="#c8c8c8" stroke-width="2.2" opacity="0.55"/><path d="M-1 9.0 L14 -13.5" stroke="#262626" stroke-width="1.2" opacity="0.45"/><path d="M-1 14.0 L14 -8.5" stroke="#c8c8c8" stroke-width="2.2" opacity="0.55"/><path d="M-1 18.5 L14 -4.0" stroke="#262626" stroke-width="1.2" opacity="0.45"/><path d="M-1 23.5 L14 1.0" stroke="#c8c8c8" stroke-width="2.2" opacity="0.55"/><path d="M-1 28.0 L14 5.5" stroke="#262626" stroke-width="1.2" opacity="0.45"/><path d="M-1 33.0 L14 10.5" stroke="#c8c8c8" stroke-width="2.2" opacity="0.55"/><path d="M-1 37.5 L14 15.0" stroke="#262626" stroke-width="1.2" opacity="0.45"/><path d="M-1 42.5 L14 20.0" stroke="#c8c8c8" stroke-width="2.2" opacity="0.55"/><path d="M-1 47.0 L14 24.5" stroke="#262626" stroke-width="1.2" opacity="0.45"/><path d="M-1 52.0 L14 29.5" stroke="#c8c8c8" stroke-width="2.2" opacity="0.55"/><path d="M-1 56.5 L14 34.0" stroke="#262626" stroke-width="1.2" opacity="0.45"/></g></g><g transform="translate(27.799999999999997,366)"><clipPath id="ec12"><path d="M0.4 0 H12.6 L12.8 1.5 Q12 3.8 12.9 6 Q13.3 8.3 12.5 10.4 Q11.9 12.5 12.9 14.6 Q13.3 16.9 12.5 19 Q11.9 21 12.9 23 Q12.9 27.5 6.5 27.5 Q0.2 27.5 0.2 23 Q-0.2 20.8 0.6 18.6 Q1.1 16.5 0.2 14.4 Q-0.2 12.2 0.6 10 Q1.1 7.9 0.2 5.8 Q-0.2 3.6 0.5 1.5 Z"/></clipPath><path d="M0.4 0 H12.6 L12.8 1.5 Q12 3.8 12.9 6 Q13.3 8.3 12.5 10.4 Q11.9 12.5 12.9 14.6 Q13.3 16.9 12.5 19 Q11.9 21 12.9 23 Q12.9 27.5 6.5 27.5 Q0.2 27.5 0.2 23 Q-0.2 20.8 0.6 18.6 Q1.1 16.5 0.2 14.4 Q-0.2 12.2 0.6 10 Q1.1 7.9 0.2 5.8 Q-0.2 3.6 0.5 1.5 Z" fill="url(#em)"/><g clip-path="url(#ec12)"><path d="M-1 4.5 L14 -18.0" stroke="#c8c8c8" stroke-width="2.2" opacity="0.55"/><path d="M-1 9.0 L14 -13.5" stroke="#262626" stroke-width="1.2" opacity="0.45"/><path d="M-1 14.0 L14 -8.5" stroke="#c8c8c8" stroke-width="2.2" opacity="0.55"/><path d="M-1 18.5 L14 -4.0" stroke="#262626" stroke-width="1.2" opacity="0.45"/><path d="M-1 23.5 L14 1.0" stroke="#c8c8c8" stroke-width="2.2" opacity="0.55"/><path d="M-1 28.0 L14 5.5" stroke="#262626" stroke-width="1.2" opacity="0.45"/><path d="M-1 33.0 L14 10.5" stroke="#c8c8c8" stroke-width="2.2" opacity="0.55"/><path d="M-1 37.5 L14 15.0" stroke="#262626" stroke-width="1.2" opacity="0.45"/><path d="M-1 42.5 L14 20.0" stroke="#c8c8c8" stroke-width="2.2" opacity="0.55"/><path d="M-1 47.0 L14 24.5" stroke="#262626" stroke-width="1.2" opacity="0.45"/><path d="M-1 52.0 L14 29.5" stroke="#c8c8c8" stroke-width="2.2" opacity="0.55"/><path d="M-1 56.5 L14 34.0" stroke="#262626" stroke-width="1.2" opacity="0.45"/></g></g><g transform="translate(27.799999999999997,401)"><clipPath id="ec13"><path d="M0.4 0 H12.6 L12.8 1.5 Q12 3.8 12.9 6 Q13.3 8.3 12.5 10.4 Q11.9 12.5 12.9 14.6 Q13.3 16.9 12.5 19 Q11.9 21 12.9 23 L12.9 27.5 H0.2 L0.2 23 Q-0.2 20.8 0.6 18.6 Q1.1 16.5 0.2 14.4 Q-0.2 12.2 0.6 10 Q1.1 7.9 0.2 5.8 Q-0.2 3.6 0.5 1.5 Z"/></clipPath><path d="M0.4 0 H12.6 L12.8 1.5 Q12 3.8 12.9 6 Q13.3 8.3 12.5 10.4 Q11.9 12.5 12.9 14.6 Q13.3 16.9 12.5 19 Q11.9 21 12.9 23 L12.9 27.5 H0.2 L0.2 23 Q-0.2 20.8 0.6 18.6 Q1.1 16.5 0.2 14.4 Q-0.2 12.2 0.6 10 Q1.1 7.9 0.2 5.8 Q-0.2 3.6 0.5 1.5 Z" fill="url(#em)"/><g clip-path="url(#ec13)"><path d="M-1 4.5 L14 -18.0" stroke="#c8c8c8" stroke-width="2.2" opacity="0.55"/><path d="M-1 9.0 L14 -13.5" stroke="#262626" stroke-width="1.2" opacity="0.45"/><path d="M-1 14.0 L14 -8.5" stroke="#c8c8c8" stroke-width="2.2" opacity="0.55"/><path d="M-1 18.5 L14 -4.0" stroke="#262626" stroke-width="1.2" opacity="0.45"/><path d="M-1 23.5 L14 1.0" stroke="#c8c8c8" stroke-width="2.2" opacity="0.55"/><path d="M-1 28.0 L14 5.5" stroke="#262626" stroke-width="1.2" opacity="0.45"/><path d="M-1 33.0 L14 10.5" stroke="#c8c8c8" stroke-width="2.2" opacity="0.55"/><path d="M-1 37.5 L14 15.0" stroke="#262626" stroke-width="1.2" opacity="0.45"/><path d="M-1 42.5 L14 20.0" stroke="#c8c8c8" stroke-width="2.2" opacity="0.55"/><path d="M-1 47.0 L14 24.5" stroke="#262626" stroke-width="1.2" opacity="0.45"/><path d="M-1 52.0 L14 29.5" stroke="#c8c8c8" stroke-width="2.2" opacity="0.55"/><path d="M-1 56.5 L14 34.0" stroke="#262626" stroke-width="1.2" opacity="0.45"/></g></g><g transform="translate(27.799999999999997,436)"><clipPath id="ec14"><path d="M0.4 0 H12.6 L12.8 1.5 Q12 3.8 12.9 6 Q13.3 8.3 12.5 10.4 Q11.9 12.5 12.9 14.6 Q13.3 16.9 12.5 19 Q11.9 21 12.9 23 L12.9 26 Q12.9 27.5 11.4 27.5 H1.6 Q0.2 27.5 0.2 26 L0.2 23 Q-0.2 20.8 0.6 18.6 Q1.1 16.5 0.2 14.4 Q-0.2 12.2 0.6 10 Q1.1 7.9 0.2 5.8 Q-0.2 3.6 0.5 1.5 Z"/></clipPath><path d="M0.4 0 H12.6 L12.8 1.5 Q12 3.8 12.9 6 Q13.3 8.3 12.5 10.4 Q11.9 12.5 12.9 14.6 Q13.3 16.9 12.5 19 Q11.9 21 12.9 23 L12.9 26 Q12.9 27.5 11.4 27.5 H1.6 Q0.2 27.5 0.2 26 L0.2 23 Q-0.2 20.8 0.6 18.6 Q1.1 16.5 0.2 14.4 Q-0.2 12.2 0.6 10 Q1.1 7.9 0.2 5.8 Q-0.2 3.6 0.5 1.5 Z" fill="url(#em)"/><g clip-path="url(#ec14)"><path d="M-1 4.5 L14 -18.0" stroke="#c8c8c8" stroke-width="2.2" opacity="0.55"/><path d="M-1 9.0 L14 -13.5" stroke="#262626" stroke-width="1.2" opacity="0.45"/><path d="M-1 14.0 L14 -8.5" stroke="#c8c8c8" stroke-width="2.2" opacity="0.55"/><path d="M-1 18.5 L14 -4.0" stroke="#262626" stroke-width="1.2" opacity="0.45"/><path d="M-1 23.5 L14 1.0" stroke="#c8c8c8" stroke-width="2.2" opacity="0.55"/><path d="M-1 28.0 L14 5.5" stroke="#262626" stroke-width="1.2" opacity="0.45"/><path d="M-1 33.0 L14 10.5" stroke="#c8c8c8" stroke-width="2.2" opacity="0.55"/><path d="M-1 37.5 L14 15.0" stroke="#262626" stroke-width="1.2" opacity="0.45"/><path d="M-1 42.5 L14 20.0" stroke="#c8c8c8" stroke-width="2.2" opacity="0.55"/><path d="M-1 47.0 L14 24.5" stroke="#262626" stroke-width="1.2" opacity="0.45"/><path d="M-1 52.0 L14 29.5" stroke="#c8c8c8" stroke-width="2.2" opacity="0.55"/><path d="M-1 56.5 L14 34.0" stroke="#262626" stroke-width="1.2" opacity="0.45"/></g></g><g transform="translate(26.5,471)"><path d="M2.7 0 H12.4 V19 Q14.9 19 14.9 20.5 V23.5 L11.5 27.5 H3.3 L0 23.5 V20.5 Q0 19 2.7 19 Z" fill="url(#fm)"/><path d="M0 23.3 H14.9" stroke="#777" stroke-width="0.8" opacity="0.5"/></g><g transform="translate(22,506)"><path d="M6 0 H18.7 V5 H21 V11 H19.9 V21.6 H22 Q24 22 24 24.5 V27.8 H0 V24.5 Q0 22 2 21.6 H4.6 V11 H3.3 V5 H6 Z" fill="url(#fc)"/><path d="M3.3 8 H21 M4.6 11 H19.9 M4.6 17 H19.9" stroke="#555" stroke-width="0.9" opacity="0.6"/><path d="M5.5 22.5 V27.8 M11 23 V27.8 M16.5 22.5 V27.8" stroke="#444" stroke-width="1.2" opacity="0.6"/><path d="M6 0 H8 V2 H6 Z" fill="#222"/></g><g transform="translate(29.200000000000003,541)"><path d="M0 0 H9.7 V20 H0 Z" fill="url(#fm)"/></g></svg>
</div>
<div class="sb" style="left:12px;top:663px;width:453px;height:6px"></div>
<div class="sb" style="left:875px;top:527px;width:6px;height:121px"></div>
<div class="a" style="left:0;top:418px;width:880px;height:55px;border:5px solid #e81c24"></div>
<svg style="left:10px;top:691px" width="35" height="34" viewBox="0 0 35 34"><g fill="none" stroke="#0696d7" stroke-width="1.2" stroke-linejoin="round"><path d="M6.45 25.4 L7.9 19.8 L22.6 5.1 Q24.4 3.5 26.2 5.2 L27.3 6.3 Q29 8.2 27.3 9.9 L12.4 24.2 Z"/><path d="M8.2 19.5 L12.2 23.6"/><path d="M21 7.2 L24.9 11"/></g></svg>
<svg style="left:50px;top:691px" width="35" height="34" viewBox="0 0 35 34"><g fill="none" stroke="#0696d7" stroke-width="1.2"><path d="M10.6 21.8 H6.45 V4.45 H15.5 L17.2 5.8"/><path d="M12.6 8.2 H22.1 L27.5 13.5 V25.4 H12.6 Z"/><path d="M22.4 8.6 V13.5 H27.3"/><path d="M22.4 8.6 L27.3 13.5 H22.4 Z" fill="#0696d7" opacity="0.5" stroke="none"/></g></svg>
<svg style="left:90px;top:691px" width="35" height="34" viewBox="0 0 35 34"><g fill="none" stroke="#c9c9c9" stroke-width="1.2"><path d="M7.3 5.45 H5.2 V24.4 H14"/><path d="M17.8 5.45 H20.1 V9.5"/><path d="M7.6 8.3 L7.3 4.3 H10.2 L10.9 2.7 H14.6 L15.3 4.3 H17.9 L17.5 8.3 Z"/><path d="M16.5 11.6 H25.8 L28.8 15.2 V26.8 H16.5 Z"/><path d="M25.8 11.6 L28.8 15.2 H25.8 Z" fill="#c9c9c9" stroke="none"/></g></svg>
<div class="a" style="left:134px;top:689px;width:1px;height:35px;background:#d9d9d9"></div>
<svg style="left:143px;top:689px" width="35" height="34" viewBox="0 0 35 34"><g fill="none" stroke="#c9c9c9" stroke-width="1.2"><path d="M8.6 8.45 H26.3 V12.5 H8.6 Z"/><path d="M12.5 8.45 V5 H22.4 V8.45"/><path d="M14.5 7.7 H20.1" stroke-width="1"/><path d="M9.9 12.5 V28.6 H24.9 V12.5"/></g></svg>
<div class="a" style="left:7px;top:726px;width:879px;height:2px;background:#e8ecef"></div>
<div class="a" style="left:7px;top:728px;width:879px;height:61px;background:#f5f7f9"></div>
<div class="a" style="left:7px;top:789px;width:879px;height:1px;background:#e6eaed"></div>
<div class="h" style="left:26px;top:748px">Données de coupe</div>
<div class="h" style="left:266px;top:738px">Vitesse de<br>broche</div>
<div class="h" style="left:391px;top:738px">Vitesse de<br>coupe</div>
<div class="h" style="left:516px;top:738px">Avance de<br>coupe</div>
<div class="h" style="left:641px;top:738px">Avance par<br>dent</div>
<div class="h" style="left:766px;top:738px">Avance<br>d'entrée</div>
<div class="clip" style="left:7px;top:790px;width:863px;height:191px">
<div class="t" style="left:19px;top:8.0px">Default preset</div>
<div class="t" style="left:259px;top:8.0px">5000 tr/min</div>
<div class="t" style="left:384px;top:8.0px">314.15927 m/<span style="letter-spacing:-0.6px">...</span></div>
<div class="t" style="left:509px;top:8.0px">1000 mm/min</div>
<div class="t" style="left:634px;top:8.0px">0.06667 mm</div>
<div class="t" style="left:759px;top:8.0px">1000 mm/min</div>
<div class="sep" style="left:0;top:34px;width:863px"></div>
<div class="t" style="left:19px;top:43.0px">Aluminum - Slotting</div>
<div class="t" style="left:259px;top:43.0px">4851 tr/min</div>
<div class="t" style="left:384px;top:43.0px">304.8 m/min</div>
<div class="t" style="left:509px;top:43.0px">3196.21 mm/<span style="letter-spacing:-0.6px">...</span></div>
<div class="t" style="left:634px;top:43.0px">0.21962 mm</div>
<div class="t" style="left:759px;top:43.0px">3196.21 mm/<span style="letter-spacing:-0.6px">...</span></div>
<div class="a" style="left:0;top:70px;width:863px;height:34px;background:#9dd5ef"></div>
<div class="sep" style="left:0;top:69px;width:863px"></div>
<div class="t" style="left:19px;top:78.0px">Aluminum - Roughing</div>
<div class="t" style="left:259px;top:78.0px">4851 tr/min</div>
<div class="t" style="left:384px;top:78.0px">304.8 m/min</div>
<div class="t" style="left:509px;top:78.0px">3196.21 mm/<span style="letter-spacing:-0.6px">...</span></div>
<div class="t" style="left:634px;top:78.0px">0.21962 mm</div>
<div class="t" style="left:759px;top:78.0px">3196.21 mm/<span style="letter-spacing:-0.6px">...</span></div>
<div class="sep" style="left:0;top:104px;width:863px"></div>
<div class="t" style="left:19px;top:113.0px">Aluminum - Finishing</div>
<div class="t" style="left:259px;top:113.0px">4851 tr/min</div>
<div class="t" style="left:384px;top:113.0px">304.8 m/min</div>
<div class="t" style="left:509px;top:113.0px">4038.87 mm/<span style="letter-spacing:-0.6px">...</span></div>
<div class="t" style="left:634px;top:113.0px">0.27753 mm</div>
<div class="t" style="left:759px;top:113.0px">4038.87 mm/<span style="letter-spacing:-0.6px">...</span></div>
<div class="sep" style="left:0;top:139px;width:863px"></div>
<div class="t" style="left:19px;top:148.0px">Brass - Slotting</div>
<div class="t" style="left:259px;top:148.0px">2426 tr/min</div>
<div class="t" style="left:384px;top:148.0px">152.4 m/min</div>
<div class="t" style="left:509px;top:148.0px">1278.7 mm/min</div>
<div class="t" style="left:634px;top:148.0px">0.17573 mm</div>
<div class="t" style="left:759px;top:148.0px">1278.7 mm/min</div>
<div class="sep" style="left:0;top:174px;width:863px"></div>
<div class="t" style="left:19px;top:183.0px">Brass - Roughing</div>
<div class="t" style="left:259px;top:183.0px">2426 tr/min</div>
<div class="t" style="left:384px;top:183.0px">152.4 m/min</div>
<div class="t" style="left:509px;top:183.0px">1278.7 mm/min</div>
<div class="t" style="left:634px;top:183.0px">0.17573 mm</div>
<div class="t" style="left:759px;top:183.0px">1278.7 mm/min</div>
</div>
<div class="sb" style="left:12px;top:987px;width:651px;height:6px"></div>
<div class="sb" style="left:875px;top:795px;width:6px;height:52px"></div>
<div class="a" style="left:1px;top:854px;width:883px;height:48px;border:5px solid #e81c24"></div>
<div class="a" style="left:899px;top:0;width:503px;height:42px;background:#eeeeee"></div>
<div class="a" style="left:982px;top:0;width:74px;height:42px;background:#fff"></div>
<div class="a" style="left:915px;top:9px;font-size:18px;color:#6a6a6a;letter-spacing:0.3px;white-space:nowrap">Filtres</div>
<div class="a" style="left:997px;top:9px;font-size:18px;color:#333;-webkit-text-stroke:0.35px #333;letter-spacing:0.9px;white-space:nowrap">Infos</div>
<svg style="left:1373px;top:9px" width="20" height="20" viewBox="0 0 20 20"><circle cx="10" cy="10" r="10" fill="#808080"/><path d="M6.3 7.3 Q6.5 3.6 10 3.6 Q13.6 3.6 13.6 6.8 Q13.6 8.6 11.8 9.8 Q10.8 10.5 10.8 11.5 V12.5" fill="none" stroke="#fff" stroke-width="2"/><rect x="9.6" y="14" width="2.4" height="2.4" fill="#fff"/></svg>
<div class="t" style="left:909px;top:52px;font-size:14.5px;color:#555;letter-spacing:0.05px">Bibliothèque Fusion 360</div>
<svg style="left:1077.7px;top:54px" width="10" height="12" viewBox="0 0 10 12"><path d="M2.5 1.5 L7 6 L2.5 10.5" fill="none" stroke="#6a6a6a" stroke-width="1.6"/></svg>
<div class="t" style="left:1099px;top:52px;font-size:14.5px;color:#555;letter-spacing:0.3px">Milling Tools (Metric)</div>
<div class="a" style="left:909px;top:84px;font-size:19.5px;color:#222;letter-spacing:0.75px;-webkit-text-stroke:0.25px #222;white-space:nowrap;line-height:22px">∅20mm R1mm (20mm Bullnose Endmill)</div>
<svg style="left:899px;top:114px" width="503" height="436"><line x1="1.80" y1="0" x2="1.80" y2="436" stroke="#dcedf7" stroke-width="1.2"/><line x1="16.60" y1="0" x2="16.60" y2="436" stroke="#dcedf7" stroke-width="1.2"/><line x1="31.40" y1="0" x2="31.40" y2="436" stroke="#dcedf7" stroke-width="1.2"/><line x1="46.20" y1="0" x2="46.20" y2="436" stroke="#dcedf7" stroke-width="1.2"/><line x1="61.00" y1="0" x2="61.00" y2="436" stroke="#dcedf7" stroke-width="1.2"/><line x1="75.80" y1="0" x2="75.80" y2="436" stroke="#dcedf7" stroke-width="1.2"/><line x1="90.60" y1="0" x2="90.60" y2="436" stroke="#dcedf7" stroke-width="1.2"/><line x1="105.40" y1="0" x2="105.40" y2="436" stroke="#b6dcef" stroke-width="1.2"/><line x1="120.20" y1="0" x2="120.20" y2="436" stroke="#dcedf7" stroke-width="1.2"/><line x1="135.00" y1="0" x2="135.00" y2="436" stroke="#dcedf7" stroke-width="1.2"/><line x1="149.80" y1="0" x2="149.80" y2="436" stroke="#dcedf7" stroke-width="1.2"/><line x1="164.60" y1="0" x2="164.60" y2="436" stroke="#dcedf7" stroke-width="1.2"/><line x1="179.40" y1="0" x2="179.40" y2="436" stroke="#dcedf7" stroke-width="1.2"/><line x1="194.20" y1="0" x2="194.20" y2="436" stroke="#dcedf7" stroke-width="1.2"/><line x1="209.00" y1="0" x2="209.00" y2="436" stroke="#dcedf7" stroke-width="1.2"/><line x1="223.80" y1="0" x2="223.80" y2="436" stroke="#dcedf7" stroke-width="1.2"/><line x1="238.60" y1="0" x2="238.60" y2="436" stroke="#dcedf7" stroke-width="1.2"/><line x1="268.20" y1="0" x2="268.20" y2="436" stroke="#dcedf7" stroke-width="1.2"/><line x1="283.00" y1="0" x2="283.00" y2="436" stroke="#dcedf7" stroke-width="1.2"/><line x1="297.80" y1="0" x2="297.80" y2="436" stroke="#dcedf7" stroke-width="1.2"/><line x1="312.60" y1="0" x2="312.60" y2="436" stroke="#dcedf7" stroke-width="1.2"/><line x1="327.40" y1="0" x2="327.40" y2="436" stroke="#dcedf7" stroke-width="1.2"/><line x1="342.20" y1="0" x2="342.20" y2="436" stroke="#dcedf7" stroke-width="1.2"/><line x1="357.00" y1="0" x2="357.00" y2="436" stroke="#dcedf7" stroke-width="1.2"/><line x1="371.80" y1="0" x2="371.80" y2="436" stroke="#dcedf7" stroke-width="1.2"/><line x1="386.60" y1="0" x2="386.60" y2="436" stroke="#dcedf7" stroke-width="1.2"/><line x1="401.40" y1="0" x2="401.40" y2="436" stroke="#b6dcef" stroke-width="1.2"/><line x1="416.20" y1="0" x2="416.20" y2="436" stroke="#dcedf7" stroke-width="1.2"/><line x1="431.00" y1="0" x2="431.00" y2="436" stroke="#dcedf7" stroke-width="1.2"/><line x1="445.80" y1="0" x2="445.80" y2="436" stroke="#dcedf7" stroke-width="1.2"/><line x1="460.60" y1="0" x2="460.60" y2="436" stroke="#dcedf7" stroke-width="1.2"/><line x1="475.40" y1="0" x2="475.40" y2="436" stroke="#dcedf7" stroke-width="1.2"/><line x1="490.20" y1="0" x2="490.20" y2="436" stroke="#dcedf7" stroke-width="1.2"/><line x1="0" y1="1.10" x2="503" y2="1.10" stroke="#dcedf7" stroke-width="1.2"/><line x1="0" y1="15.90" x2="503" y2="15.90" stroke="#dcedf7" stroke-width="1.2"/><line x1="0" y1="30.70" x2="503" y2="30.70" stroke="#dcedf7" stroke-width="1.2"/><line x1="0" y1="45.50" x2="503" y2="45.50" stroke="#dcedf7" stroke-width="1.2"/><line x1="0" y1="60.30" x2="503" y2="60.30" stroke="#dcedf7" stroke-width="1.2"/><line x1="0" y1="75.10" x2="503" y2="75.10" stroke="#b6dcef" stroke-width="1.2"/><line x1="0" y1="89.90" x2="503" y2="89.90" stroke="#dcedf7" stroke-width="1.2"/><line x1="0" y1="104.70" x2="503" y2="104.70" stroke="#dcedf7" stroke-width="1.2"/><line x1="0" y1="119.50" x2="503" y2="119.50" stroke="#dcedf7" stroke-width="1.2"/><line x1="0" y1="134.30" x2="503" y2="134.30" stroke="#dcedf7" stroke-width="1.2"/><line x1="0" y1="149.10" x2="503" y2="149.10" stroke="#dcedf7" stroke-width="1.2"/><line x1="0" y1="163.90" x2="503" y2="163.90" stroke="#dcedf7" stroke-width="1.2"/><line x1="0" y1="178.70" x2="503" y2="178.70" stroke="#dcedf7" stroke-width="1.2"/><line x1="0" y1="193.50" x2="503" y2="193.50" stroke="#dcedf7" stroke-width="1.2"/><line x1="0" y1="208.30" x2="503" y2="208.30" stroke="#dcedf7" stroke-width="1.2"/><line x1="0" y1="223.10" x2="503" y2="223.10" stroke="#b6dcef" stroke-width="1.2"/><line x1="0" y1="237.90" x2="503" y2="237.90" stroke="#dcedf7" stroke-width="1.2"/><line x1="0" y1="252.70" x2="503" y2="252.70" stroke="#dcedf7" stroke-width="1.2"/><line x1="0" y1="267.50" x2="503" y2="267.50" stroke="#dcedf7" stroke-width="1.2"/><line x1="0" y1="282.30" x2="503" y2="282.30" stroke="#dcedf7" stroke-width="1.2"/><line x1="0" y1="297.10" x2="503" y2="297.10" stroke="#dcedf7" stroke-width="1.2"/><line x1="0" y1="311.90" x2="503" y2="311.90" stroke="#dcedf7" stroke-width="1.2"/><line x1="0" y1="326.70" x2="503" y2="326.70" stroke="#dcedf7" stroke-width="1.2"/><line x1="0" y1="341.50" x2="503" y2="341.50" stroke="#dcedf7" stroke-width="1.2"/><line x1="0" y1="356.30" x2="503" y2="356.30" stroke="#dcedf7" stroke-width="1.2"/><line x1="0" y1="385.90" x2="503" y2="385.90" stroke="#dcedf7" stroke-width="1.2"/><line x1="0" y1="400.70" x2="503" y2="400.70" stroke="#dcedf7" stroke-width="1.2"/><line x1="0" y1="415.50" x2="503" y2="415.50" stroke="#dcedf7" stroke-width="1.2"/><line x1="0" y1="430.30" x2="503" y2="430.30" stroke="#dcedf7" stroke-width="1.2"/><line x1="253.40" y1="0" x2="253.40" y2="66.00" stroke="#858585" stroke-width="2"/><line x1="253.40" y1="371.10" x2="253.40" y2="436" stroke="#858585" stroke-width="2"/><line x1="0" y1="371.10" x2="503" y2="371.10" stroke="#858585" stroke-width="2"/><defs><linearGradient id="hb" x1="0" x2="1"><stop offset="0" stop-color="#5eb8e0"/><stop offset="0.08" stop-color="#6fcff3"/><stop offset="0.3" stop-color="#8ef5fd"/><stop offset="0.5" stop-color="#82e6fa"/><stop offset="0.62" stop-color="#6fcaee"/><stop offset="0.8" stop-color="#5499ba"/><stop offset="1" stop-color="#45809c"/></linearGradient><linearGradient id="hm" x1="0" x2="1"><stop offset="0" stop-color="#5bb2d9"/><stop offset="0.3" stop-color="#76d3f5"/><stop offset="0.6" stop-color="#66bade"/><stop offset="0.8" stop-color="#5093b3"/><stop offset="1" stop-color="#437d98"/></linearGradient><linearGradient id="hd" x1="0" x2="1"><stop offset="0" stop-color="#4f92b2"/><stop offset="0.4" stop-color="#5296b5"/><stop offset="1" stop-color="#41788f"/></linearGradient><linearGradient id="hk" x1="0" x2="1"><stop offset="0" stop-color="#3c6c84"/><stop offset="0.5" stop-color="#42778f"/><stop offset="1" stop-color="#447f99"/></linearGradient><linearGradient id="og" x1="0" x2="1"><stop offset="0" stop-color="#f49c1a"/><stop offset="0.1" stop-color="#fbb01e"/><stop offset="0.35" stop-color="#fdc520"/><stop offset="0.6" stop-color="#fcb81f"/><stop offset="0.72" stop-color="#f9a51c"/><stop offset="0.88" stop-color="#d88a18"/><stop offset="1" stop-color="#a66f19"/></linearGradient><linearGradient id="gr" x1="0" x2="1"><stop offset="0" stop-color="#959595"/><stop offset="0.35" stop-color="#c8c8c8"/><stop offset="0.7" stop-color="#a5a5a5"/><stop offset="1" stop-color="#666"/></linearGradient></defs><rect x="224.20" y="258.50" width="58.60" height="112.80" rx="0" fill="url(#og)"/><rect x="224.20" y="250.80" width="58.60" height="8.40" rx="0" fill="url(#gr)"/><path d="M180.20 240.20 L326.70 240.20 L309.50 251.20 L196.80 251.20 Z" fill="url(#hk)"/><rect x="180.20" y="177.80" width="146.50" height="63.00" rx="0" fill="url(#hb)"/><rect x="194.50" y="163.50" width="117.30" height="14.70" rx="0" fill="url(#hb)"/><path d="M188.20 157.20 L318.70 157.20 L311.80 164.00 L194.50 164.00 Z" fill="url(#hd)"/><rect x="188.10" y="124.50" width="130.80" height="33.10" rx="0" fill="url(#hb)"/><path d="M160.60 119.60 L346.20 119.60 L344.60 122.30 L322.60 122.30 L319.10 125.00 L188.10 125.00 L184.60 122.30 L162.20 122.30 Z" fill="url(#hd)"/><rect x="160.20" y="108.50" width="186.40" height="11.90" rx="1.6" fill="url(#hb)"/><path d="M170.10 102.40 L336.30 102.40 L346.60 109.00 L160.20 109.00 Z" fill="url(#hm)"/><rect x="170.10" y="93.20" width="166.20" height="9.60" rx="0" fill="url(#hb)"/><path d="M160.20 87.80 L346.60 87.80 L336.30 93.60 L170.10 93.60 Z" fill="url(#hd)"/><rect x="160.20" y="75.00" width="186.40" height="13.30" rx="1.6" fill="url(#hb)"/><rect x="188.10" y="65.30" width="131.00" height="10.10" rx="0" fill="url(#hb)"/><circle cx="253.40" cy="371.10" r="3.8" fill="#000"/></svg>
<div class="a" style="left:1310px;top:502px;width:80px;height:35px;background:#fff;border-radius:4px;box-shadow:0 1px 3px rgba(0,0,0,0.2)"></div>
<svg style="left:1314px;top:516px" width="34" height="11" viewBox="0 0 34 11"><path d="M1.5 1.5 V9.5 H32.5 V1.5 M17 5.5 V9.5" fill="none" stroke="#444" stroke-width="1.3"/></svg>
<div class="t" style="left:1353px;top:512px;font-size:14px;color:#444;letter-spacing:0.2px">1 cm</div>
<div class="a" style="left:1160px;top:554px;width:1px;height:443px;background:#eceef0"></div>
<div class="sep" style="left:904px;top:586px;width:480px"></div>
<div class="t" style="left:932px;top:559px;font-size:14.5px;color:#333;letter-spacing:0.9px">Description</div>
<div class="t" style="left:1165px;top:559px;font-size:14.5px;color:#333;letter-spacing:0.85px">20mm Bullnose Endmill</div>
<div class="sep" style="left:904px;top:618px;width:480px"></div>
<div class="t" style="left:932px;top:591px;font-size:14.5px;color:#333;letter-spacing:0.9px">Distributeur</div>
<div class="sep" style="left:904px;top:650px;width:480px"></div>
<div class="t" style="left:932px;top:623px;font-size:14.5px;color:#333;letter-spacing:0.9px">ID produit</div>
<div class="sep" style="left:904px;top:682px;width:480px"></div>
<div class="t" style="left:932px;top:655px;font-size:14.5px;color:#333;letter-spacing:0.9px">Lien vers le produit</div>
<div class="sep" style="left:904px;top:714px;width:480px"></div>
<div class="t" style="left:932px;top:687px;font-size:14.5px;color:#333;letter-spacing:0.9px">Diamètre</div>
<div class="t" style="left:1165px;top:687px;font-size:14.5px;color:#333;letter-spacing:0.85px">20 mm</div>
<div class="sep" style="left:904px;top:746px;width:480px"></div>
<div class="t" style="left:932px;top:719px;font-size:14.5px;color:#333;letter-spacing:0.9px">Diamètre du corps</div>
<div class="t" style="left:1165px;top:719px;font-size:14.5px;color:#333;letter-spacing:0.85px">20 mm</div>
<div class="sep" style="left:904px;top:778px;width:480px"></div>
<div class="t" style="left:932px;top:751px;font-size:14.5px;color:#333;letter-spacing:0.9px">Longueur totale</div>
<div class="t" style="left:1165px;top:751px;font-size:14.5px;color:#333;letter-spacing:0.85px">100 mm</div>
<div class="sep" style="left:904px;top:810px;width:480px"></div>
<div class="t" style="left:932px;top:783px;font-size:14.5px;color:#333;letter-spacing:0.9px">Longueur sous le porte-outil</div>
<div class="t" style="left:1165px;top:783px;font-size:14.5px;color:#333;letter-spacing:0.85px">40.5 mm</div>
<div class="sep" style="left:904px;top:842px;width:480px"></div>
<div class="t" style="left:932px;top:815px;font-size:14.5px;color:#333;letter-spacing:0.9px">Long. épaulement</div>
<div class="t" style="left:1165px;top:815px;font-size:14.5px;color:#333;letter-spacing:0.85px">38 mm</div>
<div class="sep" style="left:904px;top:874px;width:480px"></div>
<div class="t" style="left:932px;top:847px;font-size:14.5px;color:#333;letter-spacing:0.9px">Longueur de dent</div>
<div class="t" style="left:1165px;top:847px;font-size:14.5px;color:#333;letter-spacing:0.85px">38 mm</div>
<div class="sep" style="left:904px;top:906px;width:480px"></div>
<div class="t" style="left:932px;top:879px;font-size:14.5px;color:#333;letter-spacing:0.9px">Rayon de bout d&#x27;outil</div>
<div class="t" style="left:1165px;top:879px;font-size:14.5px;color:#333;letter-spacing:0.85px">1 mm</div>
<div class="sep" style="left:904px;top:938px;width:480px"></div>
<div class="t" style="left:932px;top:911px;font-size:14.5px;color:#333;letter-spacing:0.9px">Prise en charge du lubrifiant</div>
<div class="t" style="left:1165px;top:911px;font-size:14.5px;color:#333;letter-spacing:0.85px">no</div>
<div class="sep" style="left:904px;top:970px;width:480px"></div>
<div class="t" style="left:932px;top:943px;font-size:14.5px;color:#333;letter-spacing:0.9px">Type</div>
<div class="t" style="left:1165px;top:943px;font-size:14.5px;color:#333;letter-spacing:0.85px">bull nose end mill</div>
<div class="t" style="left:932px;top:975px;font-size:14.5px;color:#333;letter-spacing:0.9px">Unité</div>
<div class="t" style="left:1165px;top:975px;font-size:14.5px;color:#333;letter-spacing:0.85px">millimeters</div>
<div class="sb" style="left:1394px;top:555px;width:5px;height:131px"></div>
<div class="a" style="left:1303px;top:1008px;width:82px;height:29px;border:1px solid #c8c8c8;border-radius:3px;background:#fff"></div>
<div class="t" style="left:1320px;top:1014px;font-size:15px;color:#222;letter-spacing:0.15px">Fermer</div>
<svg style="left:1380px;top:1030px" width="22" height="16"><path d="M15.5 16.5 L22.5 11.5" stroke="#c4c4c4" stroke-width="1.2"/></svg>
</div></body></html>
